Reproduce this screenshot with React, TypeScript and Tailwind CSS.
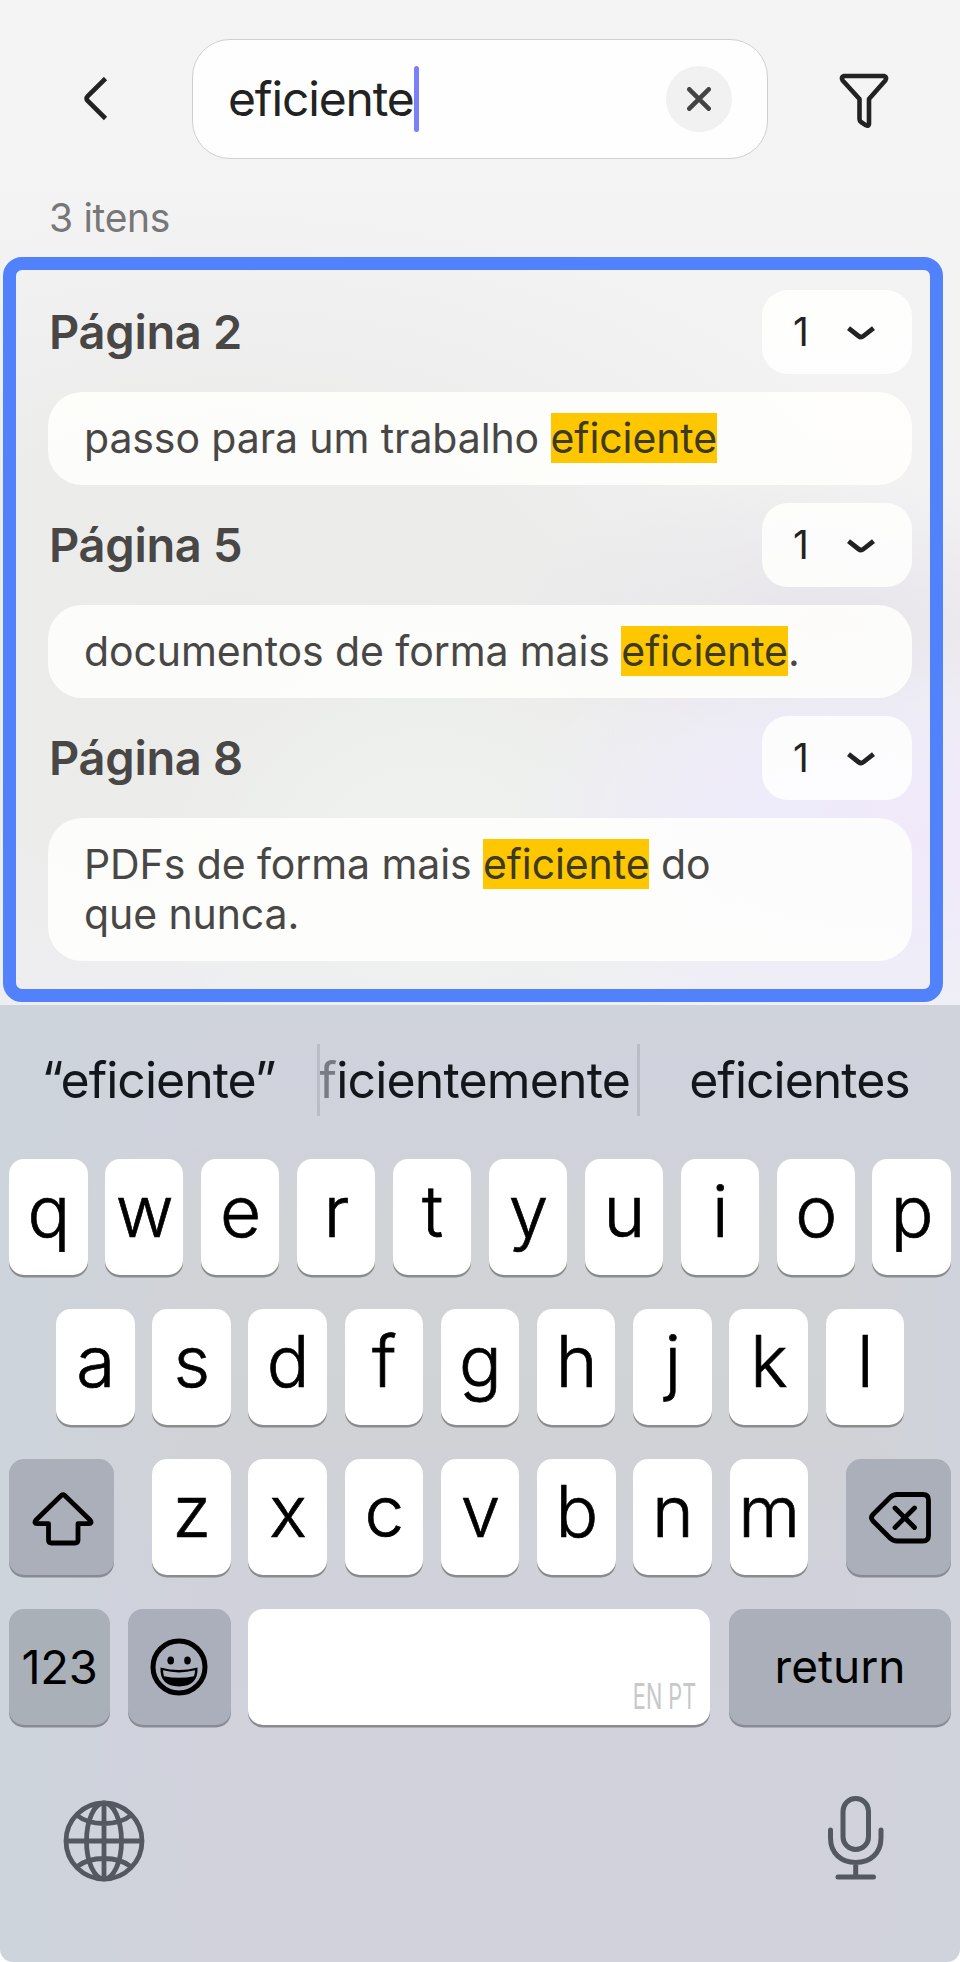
import { useState } from "react";
import type { ReactNode } from "react";

interface Result {
  page: number;
  before: string;
  after: string;
}

const results: Result[] = [
  { page: 2, before: 'passo para um trabalho ', after: '' },
  { page: 5, before: 'documentos de forma mais ', after: '.' },
  { page: 8, before: 'PDFs de forma mais ', after: ' do\nque nunca.' },
];

const firstRow = 'qwertyuiop'.split('');
const secondRow = 'asdfghjkl'.split('');
const thirdRow = 'zxcvbnm'.split('');

function LetterKey({ letter, onPress }: { letter: string; onPress: (letter: string) => void }) {
  return (
    <button
      onClick={() => onPress(letter)}
      className="flex h-[116px] w-[78.5px] items-center justify-center rounded-[15px] bg-white pb-3 pl-px text-[71px] font-light text-black shadow-[0_2.5px_0_#8a8b8d] [-webkit-text-stroke:0.7px_black]"
    >
      {letter}
    </button>
  );
}

function DarkKey({ className, onPress, children }: { className: string; onPress?: () => void; children: ReactNode }) {
  return (
    <button
      onClick={onPress}
      className={`flex h-[116px] items-center justify-center rounded-[15px] text-black shadow-[0_2.5px_0_#888b95] ${className}`}
    >
      {children}
    </button>
  );
}

function ResultGroup({ result }: { result: Result }) {
  return (
    <section className="flex flex-col gap-[18px]">
      <div className="flex h-[84px] items-center justify-between">
        <h2 className="pl-px text-[47px] font-semibold tracking-[-0.3px] text-[#484745]">Página {result.page}</h2>
        <button className="flex h-[84px] w-[150px] items-center rounded-[26px] bg-[#fffffe]/85 pt-px pl-[31px] text-[#222]">
          <span className="w-[54px] text-left text-[39px]">1</span>
          <svg width="28" height="14" viewBox="0 0 28 14" fill="none" stroke="currentColor" strokeWidth="4.8">
            <path d="M1.5 2.2 L11.5 10 Q14 12 16.5 10 L26.5 2.2" />
          </svg>
        </button>
      </div>
      <div className="rounded-[34px] bg-[#fffffd]/85 px-[36px] pt-[21px] pb-[22px]">
        <p className="text-[41px] leading-[50px] tracking-[-0.1px] whitespace-pre-line text-[#484745]">
          {result.before}
          <mark className="bg-[#ffc700] text-[#3e3a20]">eficiente</mark>
          {result.after}
        </p>
      </div>
    </section>
  );
}

export default function App() {
  const [query, setQuery] = useState('eficiente');

  const addLetter = (letter: string) => {
    setQuery(prev => prev + letter);
  };

  return (
    <div className="h-[1962px] w-[960px] overflow-hidden bg-white font-['Inter','Liberation_Sans',sans-serif]">
      <div className="h-[1005px] bg-[radial-gradient(ellipse_130px_120px_at_930px_840px,#f1e9f9_0%,transparent_100%),radial-gradient(ellipse_340px_200px_at_850px_830px,#edeaf9_0%,#eeebfa_30%,transparent_100%),radial-gradient(ellipse_330px_150px_at_830px_625px,#e6e4e9_0%,transparent_100%),radial-gradient(ellipse_300px_260px_at_430px_870px,#eef1ee_0%,#eef1ee_30%,transparent_100%),radial-gradient(ellipse_700px_460px_at_230px_650px,#ebebe9_0%,#ececeb_50%,transparent_100%),linear-gradient(#f4f4f4_0%,#f3f2f3_50%,#efeff6_100%)]">
        <header className="flex items-center pt-[39px] pl-[84px]">
          <button onClick={() => setQuery('')}>
            <svg width="24" height="44" viewBox="0 0 24 44" fill="none" stroke="#222" strokeWidth="4.6">
              <path d="M21.5 1.5 L3.8 19 Q1.5 21.5 3.8 24 L21.5 41.5" />
            </svg>
          </button>
          <div className="ml-[84px] flex h-[120px] w-[576px] items-center rounded-[38px] border border-[#cfcfd0] bg-[#fefefe] px-[35px]">
            <span className="text-[48px] tracking-[-1.15px] text-[#222]">{query}</span>
            <span className="h-[66px] w-[5px] rounded-sm bg-[#7b7ffb]" />
            <button
              onClick={() => setQuery('')}
              className="ml-auto flex size-[66px] items-center justify-center rounded-full bg-[#f1f1f1]"
            >
              <svg width="24" height="24" viewBox="0 0 24 24" stroke="#444" strokeWidth="4.6" strokeLinecap="round">
                <path d="M2.3 2.3 L21.7 21.7 M21.7 2.3 L2.3 21.7" />
              </svg>
            </button>
          </div>
          <button className="mt-[4px] ml-[71px]">
            <svg width="50" height="56" viewBox="0 0 50 56" fill="none" stroke="#222" strokeWidth="4.6" strokeLinejoin="round">
              <path d="M5 3 H45 Q48.5 4 46.3 7.5 L30 26 V51 Q29.5 53.5 27 52.3 L22 49 Q20.5 48 20.5 46 V26 L3.7 7.5 Q1.5 4 5 3 Z" />
            </svg>
          </button>
        </header>

        <p className="pt-[35px] pl-[49px] text-[39px] leading-[48px] tracking-[-0.3px] text-[#777]">3 itens</p>

        <main className="mt-[15px] ml-[2.5px] flex h-[745px] w-[940px] flex-col gap-[18px] rounded-[19px] border-[13px] border-[#5182fb] pt-[20px] pr-[17.5px] pl-[32.5px]">
          {results.map(result => (
            <ResultGroup key={result.page} result={result} />
          ))}
        </main>
      </div>

      <div className="flex h-[957px] flex-col rounded-b-[13px] bg-[linear-gradient(90deg,#cdd4dc_0%,transparent_22%,transparent_88%,#d0d3dc_100%),linear-gradient(#cfd3dc_0%,#d0d2dc_14%,#d2d3d7_22%,#d1d2d6_45%,#d1d1dc_62%,#d1d2dc_100%)]">
        <div className="flex h-[154px] pt-[39px] text-[50px] text-[#12171b]">
          <div className="flex h-[72px] w-[317px] items-center justify-center tracking-[-1px]">“eficiente”</div>
          <div className="h-[72px] w-[3px] bg-[#babdc6]" />
          <div className="flex h-[72px] w-[317px] items-center justify-end overflow-hidden pr-[7px] tracking-[-0.85px]">
            <span className="text-[#777b82]">f</span>icientemente
          </div>
          <div className="h-[72px] w-[3px] bg-[#babdc6]" />
          <div className="flex h-[72px] w-[319px] items-center justify-center tracking-[-1px]">eficientes</div>
        </div>

        <div className="flex flex-col gap-[34px]">
          <div className="flex justify-between px-[9px]">
            {firstRow.map(letter => (
              <LetterKey key={letter} letter={letter} onPress={addLetter} />
            ))}
          </div>
          <div className="flex justify-between px-[56px]">
            {secondRow.map(letter => (
              <LetterKey key={letter} letter={letter} onPress={addLetter} />
            ))}
          </div>
          <div className="flex justify-between px-[9px]">
            <DarkKey className="w-[105px] bg-[#abafba]">
              <svg width="62" height="54" viewBox="0 0 62 54" className="mt-[3px] ml-[3px]" fill="none" stroke="currentColor" strokeWidth="4.8" strokeLinejoin="round">
                <path d="M29.5 3.3 Q31 2 32.5 3.3 L58 28 Q60.5 31.5 57 31.7 H46 V48 Q46 51 43 51 H19.5 Q16.5 51 16.5 48 V31.7 H5 Q1.5 31.5 4 28 Z" />
              </svg>
            </DarkKey>
            <div className="flex w-[656px] justify-between">
              {thirdRow.map(letter => (
                <LetterKey key={letter} letter={letter} onPress={addLetter} />
              ))}
            </div>
            <DarkKey className="w-[105px] bg-[#abafba]" onPress={() => setQuery(prev => prev.slice(0, -1))}>
              <svg width="62" height="52" viewBox="0 0 62 52" className="mt-[2px] ml-[2px]" fill="none" stroke="currentColor" strokeWidth="4.8" strokeLinecap="round" strokeLinejoin="round">
                <path d="M28 2.5 H54 Q59.5 2.5 59.5 8 V43.5 Q59.5 49 54 49 H28 Q24 49 21 46 L4 29 Q1 25.75 4 22.5 L21 5.5 Q24 2.5 28 2.5 Z" />
                <path d="M26 16 L45.5 35.5 M45.5 16 L26 35.5" />
              </svg>
            </DarkKey>
          </div>
          <div className="flex px-[9px]">
            <DarkKey className="w-[101px] bg-[#a9b0b8] text-[47px] tracking-[-0.3px]">123</DarkKey>
            <DarkKey className="ml-[18px] w-[103px] bg-[#abaebb]">
              <svg width="58" height="58" viewBox="0 0 58 58" className="mr-px">
                <circle cx="29" cy="29" r="26" fill="none" stroke="currentColor" strokeWidth="5" />
                <ellipse cx="20.7" cy="22.5" rx="3.3" ry="4" />
                <ellipse cx="37.5" cy="22.5" rx="3.3" ry="4" />
                <path d="M10.5 29.5 Q29 34.5 47.5 29.5 Q48.5 48 29 48.5 Q9.5 48 10.5 29.5 Z" />
                <path d="M13 32.3 Q29 36.5 45 32.3 Q45 35.3 44 38.2 Q29 41.5 14 38.2 Q13 35.3 13 32.3 Z" fill="#abaebb" />
              </svg>
            </DarkKey>
            <button
              onClick={() => addLetter(' ')}
              className="ml-[17px] flex h-[116px] w-[462px] items-end justify-end rounded-[15px] bg-white pr-[14px] pb-[8px] shadow-[0_2.5px_0_#8a8b8d]"
            >
              <span className="origin-right scale-x-[0.62] text-[35px] leading-[42px] text-[#c7c8ca]">EN PT</span>
            </button>
            <DarkKey className="ml-[19px] w-[222px] bg-[#abafba] pb-[2px] text-[46px]">return</DarkKey>
          </div>
        </div>

        <div className="flex items-start justify-between pt-[70px] pr-[75px] pl-[63px] text-[#545861]">
          <svg width="82" height="82" viewBox="0 0 82 82" className="mt-[5px]" fill="none" stroke="currentColor" strokeWidth="4.8">
            <circle cx="41" cy="41" r="38" />
            <ellipse cx="41" cy="41" rx="17.5" ry="38" />
            <path d="M41 3 V79 M3 41 H79 M13.5 15 Q24 23.5 41 23.5 Q58 23.5 68.5 15 M13.5 67 Q24 58.5 41 58.5 Q58 58.5 68.5 67" />
          </svg>
          <svg width="58" height="86" viewBox="0 0 58 86" fill="none" stroke="currentColor" strokeWidth="5" strokeLinecap="round">
            <rect x="16" y="3.5" width="25.5" height="51" rx="12.75" />
            <path d="M3.5 35 V43 C3.5 58 14 67.5 28.7 67.5 C43.5 67.5 54 58 54 43 V35 M28.7 67.5 V82 M11 82 H46.5" />
          </svg>
        </div>
      </div>
    </div>
  );
}
